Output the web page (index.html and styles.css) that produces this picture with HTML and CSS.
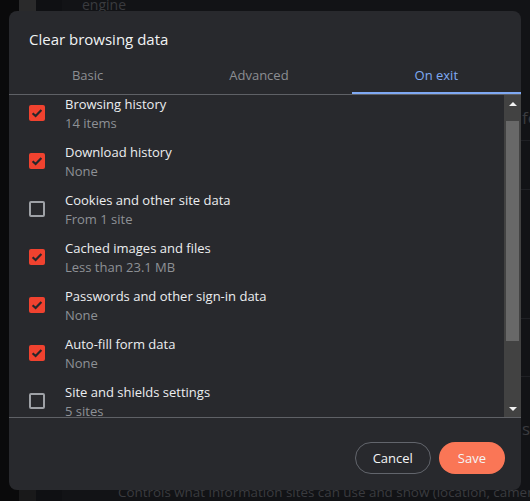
FILE: index.html
```html
<!DOCTYPE html>
<html lang="en">
<head>
<meta charset="utf-8">
<title>Clear browsing data</title>
<link rel="stylesheet" href="styles.css">
</head>
<body>
<div class="backdrop">
  <div class="col col-a"></div>
  <div class="col col-b"><div class="col-b-top"></div></div>
  <div class="col col-c"></div>
  <div class="main">
    <div class="bg-text bg-engine">engine</div>
    <div class="bg-row bg-r1"><span class="bg-side">fe</span></div>
    <div class="bg-row bg-r2"></div>
    <div class="bg-row bg-r3"></div>
    <div class="bg-row bg-r4"></div>
    <div class="bg-row bg-r5"><span class="bg-side bg-s">s</span></div>
    <div class="bg-text bg-controls">Controls what information sites can use and show (location, camera,</div>
  </div>
</div>

<div class="dialog" role="dialog">
  <div class="dialog-title">Clear browsing data</div>
  <div class="tabs">
    <div class="tab">Basic</div>
    <div class="tab">Advanced</div>
    <div class="tab tab-active">On exit</div>
  </div>
  <div class="list-wrap">
    <div class="list">
      <div class="row">
        <span class="cb cb-on"><svg viewBox="0 0 16 16" width="16" height="16"><path d="M3.6 8.2 L6.6 11 L12.4 5" /></svg></span>
        <div class="row-text"><div class="row-title">Browsing history</div><div class="row-sub">14 items</div></div>
      </div>
      <div class="row">
        <span class="cb cb-on"><svg viewBox="0 0 16 16" width="16" height="16"><path d="M3.6 8.2 L6.6 11 L12.4 5" /></svg></span>
        <div class="row-text"><div class="row-title">Download history</div><div class="row-sub">None</div></div>
      </div>
      <div class="row">
        <span class="cb cb-off"></span>
        <div class="row-text"><div class="row-title">Cookies and other site data</div><div class="row-sub">From 1 site</div></div>
      </div>
      <div class="row">
        <span class="cb cb-on"><svg viewBox="0 0 16 16" width="16" height="16"><path d="M3.6 8.2 L6.6 11 L12.4 5" /></svg></span>
        <div class="row-text"><div class="row-title">Cached images and files</div><div class="row-sub">Less than 23.1 MB</div></div>
      </div>
      <div class="row">
        <span class="cb cb-on"><svg viewBox="0 0 16 16" width="16" height="16"><path d="M3.6 8.2 L6.6 11 L12.4 5" /></svg></span>
        <div class="row-text"><div class="row-title">Passwords and other sign-in data</div><div class="row-sub">None</div></div>
      </div>
      <div class="row">
        <span class="cb cb-on"><svg viewBox="0 0 16 16" width="16" height="16"><path d="M3.6 8.2 L6.6 11 L12.4 5" /></svg></span>
        <div class="row-text"><div class="row-title">Auto-fill form data</div><div class="row-sub">None</div></div>
      </div>
      <div class="row">
        <span class="cb cb-off"></span>
        <div class="row-text"><div class="row-title">Site and shields settings</div><div class="row-sub">5 sites</div></div>
      </div>
    </div>
    <div class="scrollbar">
      <div class="sb-btn"><span class="arrow-up"></span></div>
      <div class="sb-track"><div class="sb-thumb"></div></div>
      <div class="sb-btn"><span class="arrow-down"></span></div>
    </div>
  </div>
  <div class="footer">
    <button class="btn btn-cancel">Cancel</button>
    <button class="btn btn-save">Save</button>
  </div>
</div>
</body>
</html>
```

FILE: styles.css
```css
html, body {
  margin: 0;
  padding: 0;
}
body {
  width: 530px;
  height: 501px;
  overflow: hidden;
  background: #121316;
  font-family: "Open Sans", "Noto Sans", sans-serif;
  position: relative;
}

/* darkened page behind the modal */
.backdrop {
  display: flex;
  height: 501px;
  overflow: hidden;
}
.col { height: 100%; }
.col-a { width: 19px; background: #0a0a0b; }
.col-b { width: 17px; background: #19191a; }
.col-b-top { height: 12px; background: #2a2a2b; }
.col-c { width: 26px; background: #0f1013; }
.main {
  flex: 1;
  display: flex;
  flex-direction: column;
  background: #121316;
  min-width: 0;
  overflow: hidden;
}
.bg-text {
  color: #3a3b3f;
  white-space: nowrap;
}
.bg-engine {
  font-size: 14px;
  line-height: 14px;
  margin-top: -2px;
  padding-left: 20px;
}
.bg-row {
  border-bottom: 1px solid #1f2024;
  position: relative;
}
.bg-r1 { height: 128px; }
.bg-r2 { height: 48px; }
.bg-r3 { height: 128px; }
.bg-r4 { height: 57px; }
.bg-r5 { height: 113px; border-bottom: none; }
.bg-side {
  position: absolute;
  left: 460px;
  top: 96px;
  color: #3a3b3f;
  font-size: 17px;
  line-height: 20px;
}
.bg-s {
  top: 42px;
}
.bg-controls {
  font-size: 13.4px;
  line-height: 16px;
  padding-left: 56px;
  margin-top: -6px;
}

/* dialog */
.dialog {
  position: absolute;
  left: 9px;
  top: 11px;
  width: 512px;
  height: 479px;
  background: #28292d;
  border-radius: 8px;
  display: flex;
  flex-direction: column;
  overflow: hidden;
}
.dialog-title {
  padding: 18px 20px 0;
  font-size: 15px;
  line-height: 20px;
  color: #f1f3f4;
}
.tabs {
  display: flex;
  margin-top: 8px;
  border-bottom: 1px solid #5f6166;
}
.tab {
  flex: 1 1 auto;
  text-align: center;
  font-size: 13px;
  line-height: 20px;
  padding: 8px 0 7px;
  border-bottom: 2px solid transparent;
  color: #8c8e92;
}
.tab-active {
  color: #7fa9f3;
  border-bottom-color: #7fa9f3;
}

.list-wrap {
  height: 322px;
  display: flex;
  border-bottom: 1px solid #5f6166;
}
.list {
  flex: 1;
  overflow: hidden;
}
.row {
  display: flex;
  align-items: flex-start;
  gap: 20px;
  height: 48px;
  padding-left: 20px;
}
.cb {
  width: 16px;
  height: 16px;
  margin-top: 10px;
  border-radius: 2px;
  box-sizing: border-box;
  flex: none;
  display: block;
}
.cb svg { display: block; }
.cb-on { background: #f0422f; }
.cb-on path {
  fill: none;
  stroke: #26272b;
  stroke-width: 2.2;
}
.cb-off { border: 2px solid #9ea1a6; }
.row-title {
  font-size: 13px;
  line-height: 18px;
  color: #eceef0;
}
.row-sub {
  font-size: 13px;
  line-height: 20px;
  color: #8e9196;
}

.scrollbar {
  width: 17px;
  flex: none;
  background: #424242;
  display: flex;
  flex-direction: column;
}
.sb-btn {
  height: 17px;
  display: flex;
  align-items: center;
  justify-content: center;
  flex: none;
}
.arrow-up {
  width: 0;
  height: 0;
  border-left: 4px solid transparent;
  border-right: 4px solid transparent;
  border-bottom: 4px solid #f2f2f2;
}
.arrow-down {
  width: 0;
  height: 0;
  border-left: 4px solid transparent;
  border-right: 4px solid transparent;
  border-top: 4px solid #f2f2f2;
}
.sb-track {
  flex: 1;
  padding: 9px 2px 0;
}
.sb-thumb {
  height: 220px;
  background: #686868;
}

.footer {
  flex: 1;
  display: flex;
  justify-content: flex-end;
  align-items: flex-start;
  gap: 8px;
  padding: 24px 16px 0 0;
}
.btn {
  height: 32px;
  border-radius: 16px;
  font-family: inherit;
  font-size: 13px;
  color: #f4f5f6;
  cursor: pointer;
}
.btn-cancel {
  background: transparent;
  border: 1px solid #62656c;
  padding: 0 17px;
}
.btn-save {
  background: #fa7656;
  border: none;
  padding: 0 19px;
}
```
